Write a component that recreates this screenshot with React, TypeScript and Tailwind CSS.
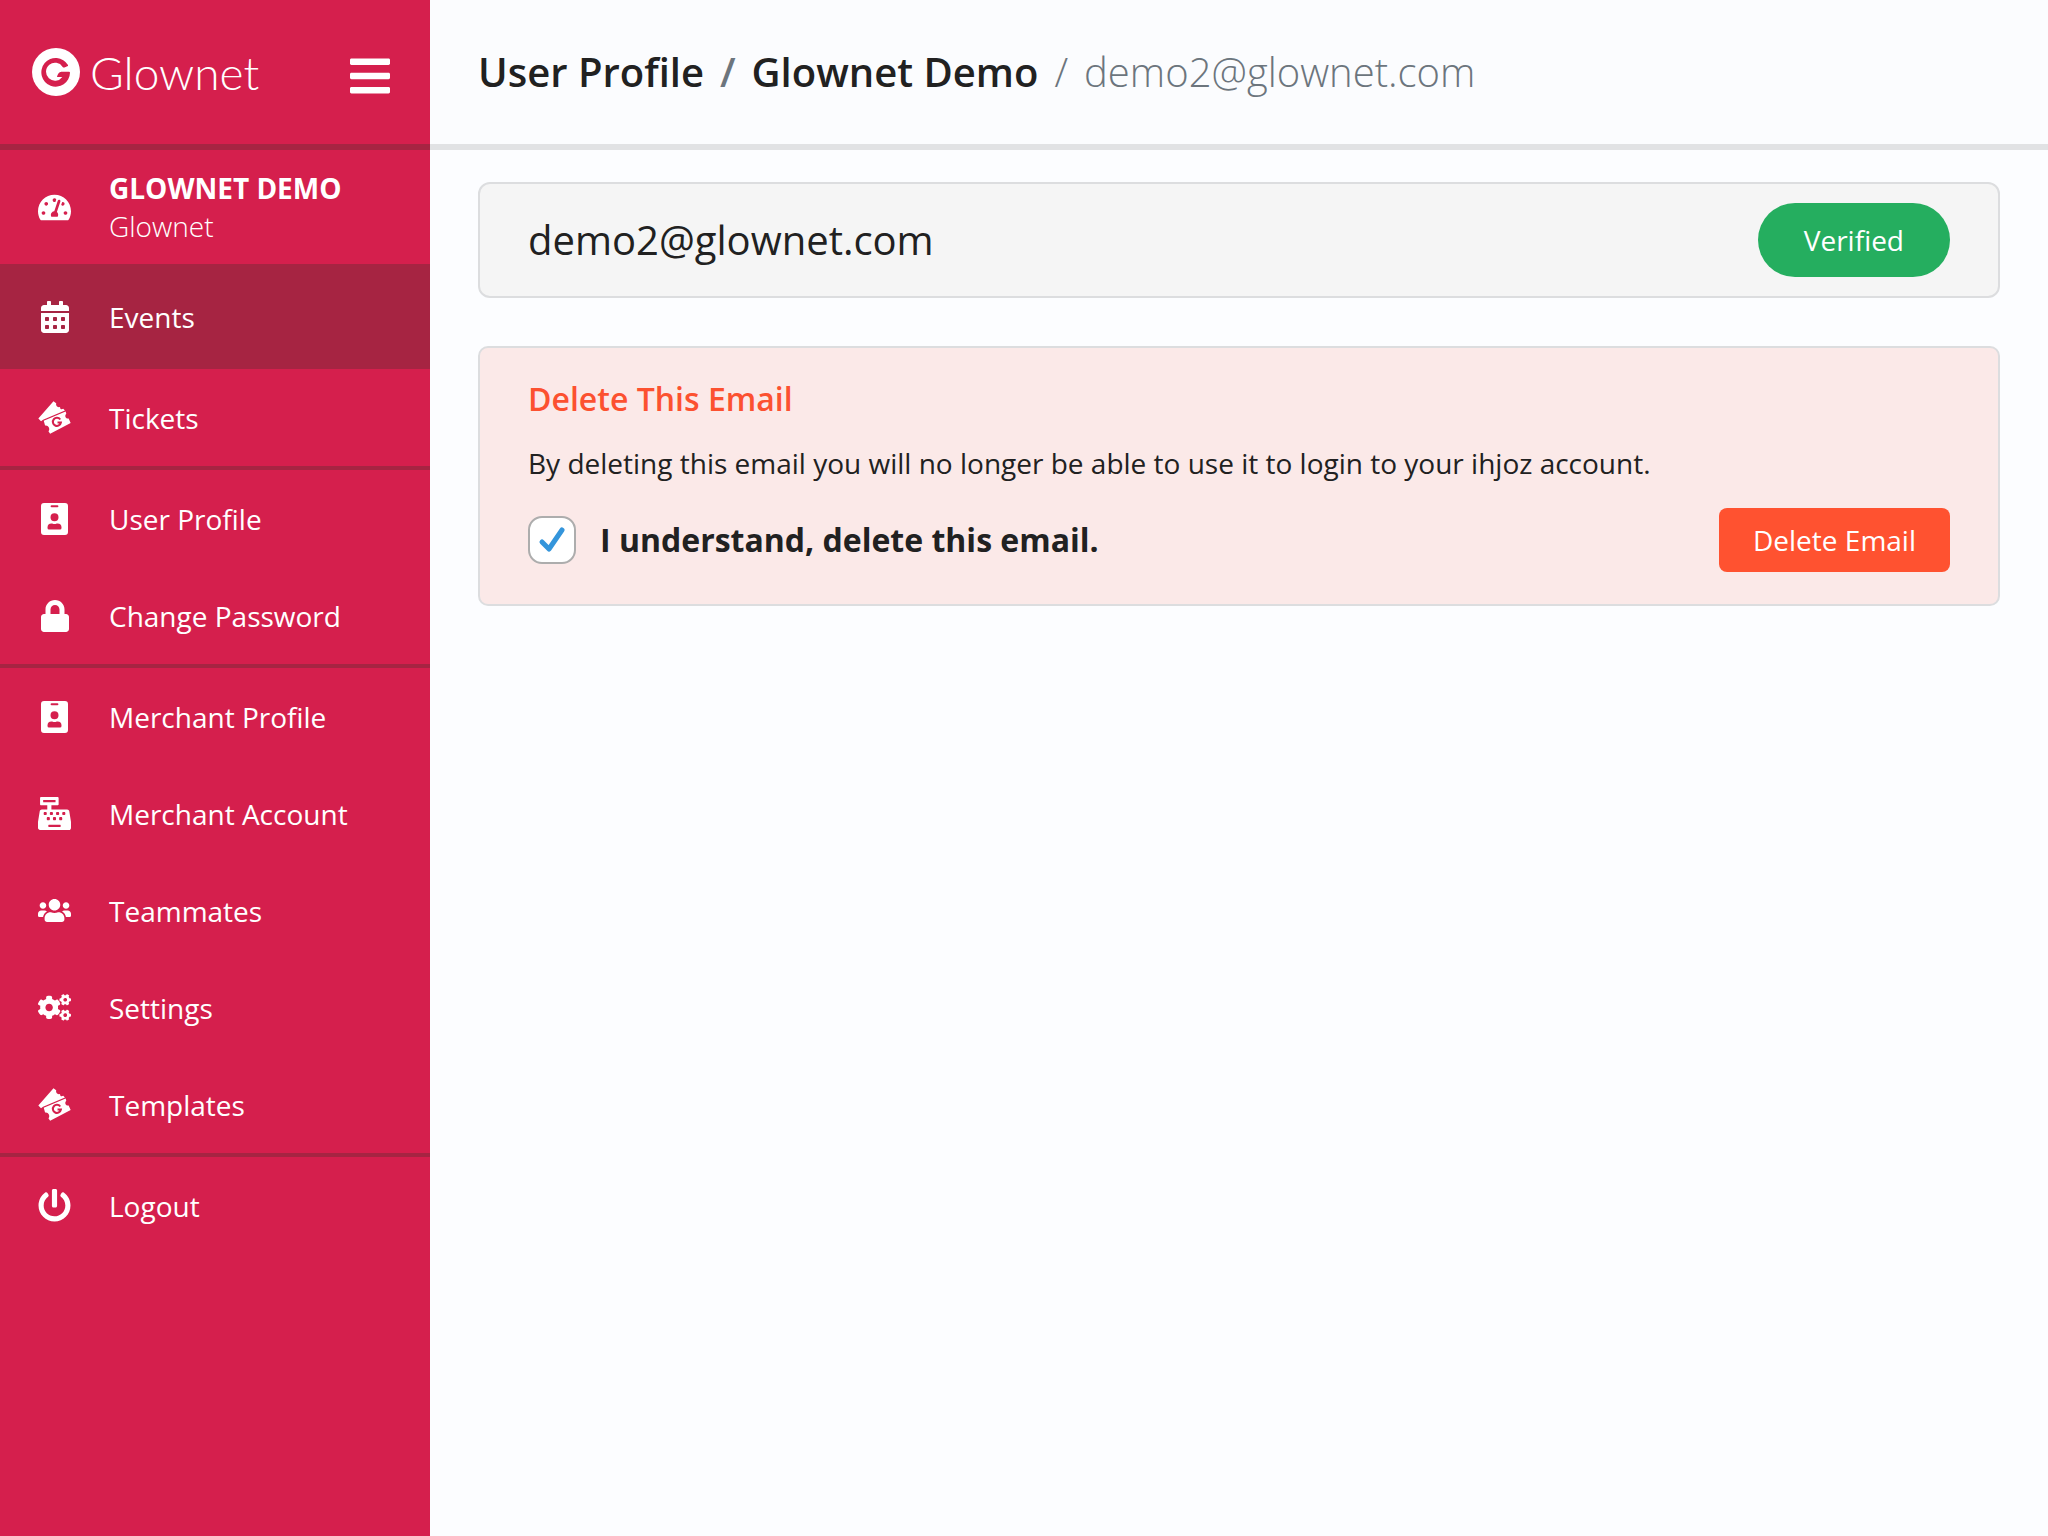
import { useState } from 'react';
import type { ReactNode } from 'react';
import {
    FaBars,
    FaCalendarAlt,
    FaCashRegister,
    FaCogs,
    FaLock,
    FaPowerOff,
    FaTachometerAlt,
    FaUsers,
} from 'react-icons/fa';

type NavItem = { label: string; icon: ReactNode };

function TicketIcon() {
    return (
        <svg viewBox="0 0 98 98" className="size-[33px]" fill="currentColor" aria-hidden="true">
            <path d="M46 1 L54 7 C52 15 58 20 64 18 L66 20 C65 24 70 26 75 23 L80 28 L15 56 L9 60 L1 52 Z" />
            <path d="M82 31 L84 38 C78 44 82 54 91 52 L97 65 L36 97 L31 90 C38 82 29 70 21 73 L17 59 Z" />
            <path d="M66 55 A12 12 0 1 0 68 64 L58 64" fill="none" stroke="#d51f4d" strokeWidth="6" />
        </svg>
    );
}

function BadgeIcon() {
    return (
        <svg viewBox="0 0 27 32" className="w-[27px] h-8" fill="currentColor" aria-hidden="true">
            <path
                fillRule="evenodd"
                d="M3 0h21a3 3 0 0 1 3 3v26a3 3 0 0 1-3 3H3a3 3 0 0 1-3-3V3a3 3 0 0 1 3-3zM10.6 2.300a1 1 0 0 0 0 2h5.800a1 1 0 0 0 0-2zM13.500 10.300a4 4 0 1 0 0 8a4 4 0 0 0 0-8zM10.500 20.500a4 4 0 0 0-4 4v.5a1.500 1.500 0 0 0 1.500 1.500h11a1.500 1.500 0 0 0 1.500-1.500v-.5a4 4 0 0 0-4-4c-1 0-1.500.6-3 .6s-2-.6-3-.6z"
            />
        </svg>
    );
}

function Logo() {
    return (
        <a href="#" className="flex items-center gap-[10px]">
            <svg viewBox="0 0 144 144" className="size-12" aria-hidden="true">
                <circle cx="72" cy="72" r="72" fill="#fff" />
                <path
                    d="M108 51 A43 43 0 1 0 114 74 Q114 71 111 71 L88 71 C81 72 76 79 75 87 L91 87 A27 27 0 1 1 92 57 Q95 60 99 58 L106 55 Q109 54 108 51 Z"
                    fill="#d51f4d"
                />
            </svg>
            <span className="pt-[2px] font-['Lato',sans-serif] font-light text-[46px] leading-[48px]">Glownet</span>
        </a>
    );
}

const groups: NavItem[][] = [
    [{ label: 'Tickets', icon: <TicketIcon /> }],
    [
        { label: 'User Profile', icon: <BadgeIcon /> },
        { label: 'Change Password', icon: <FaLock className="w-7 h-8" /> },
    ],
    [
        { label: 'Merchant Profile', icon: <BadgeIcon /> },
        { label: 'Merchant Account', icon: <FaCashRegister className="size-[33px]" /> },
        { label: 'Teammates', icon: <FaUsers className="size-[33px]" /> },
        { label: 'Settings', icon: <FaCogs className="size-[33px]" /> },
        { label: 'Templates', icon: <TicketIcon /> },
    ],
    [{ label: 'Logout', icon: <FaPowerOff className="size-[33px]" /> }],
];

function NavLink({ label, icon }: NavItem) {
    return (
        <a href="#" className="flex items-center h-[97px] pl-[38px] text-[28px] leading-[38px]">
            <span className="flex justify-center w-[33px] mr-[38px] shrink-0">{icon}</span>
            {label}
        </a>
    );
}

export default function App() {
    const [confirmed, setConfirmed] = useState(true);

    return (
        <div className="flex min-h-screen bg-[#fcfdff] text-[#212121] font-['Open_Sans',sans-serif]">
            {/* Sidebar */}
            <aside className="w-[430px] shrink-0 bg-[#d51f4d] text-white">
                <div className="flex items-center justify-between h-[150px] pl-8 pr-10 border-b-6 border-[#a62442]">
                    <Logo />
                    <button type="button" aria-label="Toggle menu" className="pt-2">
                        <FaBars className="w-10 h-[46px]" />
                    </button>
                </div>

                <nav>
                    <a href="#" className="flex items-center h-[114px] pl-[38px] text-[28px] leading-[38px]">
                        <span className="flex justify-center w-[33px] mr-[38px] shrink-0">
                            <FaTachometerAlt className="size-[33px]" />
                        </span>
                        <span>
                            <strong className="block font-bold">GLOWNET DEMO</strong>
                            <span className="block font-light">Glownet</span>
                        </span>
                    </a>

                    <div className="bg-[#a62442] py-1">
                        <NavLink label="Events" icon={<FaCalendarAlt className="w-7 h-8" />} />
                    </div>

                    {groups.map((items, i) => (
                        <div key={i} className="border-b-4 border-[#a62442] last:border-b-0">
                            {items.map((item) => (
                                <NavLink key={item.label} {...item} />
                            ))}
                        </div>
                    ))}
                </nav>
            </aside>

            {/* Content */}
            <div className="flex-1 min-w-0">
                <header className="flex items-center h-[150px] px-12 bg-[#fbfcfe] border-b-6 border-[#e1e2e4]">
                    <h1 className="text-[40px] leading-[48px] font-semibold">
                        <a href="#">User Profile</a>
                        <span className="mx-4 text-[#6c757d]">/</span>
                        <a href="#">Glownet Demo</a>
                        <span className="font-light text-[#6c757d]">
                            <span className="mx-4">/</span>
                            demo2@glownet.com
                        </span>
                    </h1>
                </header>

                <main className="flex flex-col gap-12 px-12 py-8">
                    <section className="flex items-center justify-between h-[116px] px-12 bg-[#f5f5f5] border-2 border-[#dcdddf] rounded-xl">
                        <p className="text-[40px] leading-[48px]">demo2@glownet.com</p>
                        <span className="px-[46px] py-[18px] rounded-full bg-[#25ae5f] text-white text-[28px] leading-[38px]">
                            Verified
                        </span>
                    </section>

                    <section className="px-12 py-8 bg-[#fbe9e8] border-2 border-[#dcdddf] rounded-[10px]">
                        <h2 className="text-[32px] leading-[38px] font-semibold text-[#fc5130]">Delete This Email</h2>
                        <p className="my-6 text-[28px] leading-[42px]">
                            By deleting this email you will no longer be able to use it to login to your ihjoz account.
                        </p>
                        <div className="flex items-center justify-between">
                            <label className="flex items-center gap-6 text-[32px] leading-[48px] font-bold">
                                <span className="grid size-12">
                                    <input
                                        type="checkbox"
                                        checked={confirmed}
                                        onChange={(e) => setConfirmed(e.target.checked)}
                                        className="appearance-none col-start-1 row-start-1 size-12 bg-white border-2 border-[#adadad] rounded-[14px]"
                                    />
                                    {confirmed && (
                                        <svg
                                            viewBox="0 0 48 48"
                                            className="col-start-1 row-start-1 size-12 pointer-events-none"
                                            aria-hidden="true"
                                        >
                                            <path
                                                d="M14 26 L21 33 L34 14"
                                                fill="none"
                                                stroke="#3495db"
                                                strokeWidth="5"
                                                strokeLinecap="round"
                                                strokeLinejoin="round"
                                            />
                                        </svg>
                                    )}
                                </span>
                                I understand, delete this email.
                            </label>
                            <button
                                type="button"
                                disabled={!confirmed}
                                className="h-16 px-[34px] rounded-lg bg-[#ff5230] text-white text-[28px] leading-[38px]"
                            >
                                Delete Email
                            </button>
                        </div>
                    </section>
                </main>
            </div>
        </div>
    );
}
